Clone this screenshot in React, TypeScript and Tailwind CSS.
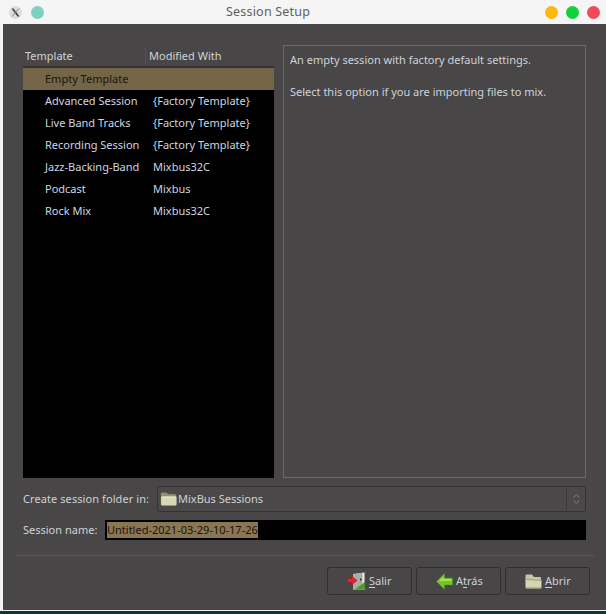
const FONT = "font-['Noto_Sans',sans-serif]";

const rows = [
  ["Advanced Session", "{Factory Template}"],
  ["Live Band Tracks", "{Factory Template}"],
  ["Recording Session", "{Factory Template}"],
  ["Jazz-Backing-Band", "Mixbus32C"],
  ["Podcast", "Mixbus"],
  ["Rock Mix", "Mixbus32C"],
];

function FolderIcon() {
  return (
    <svg width="17" height="15" viewBox="0 0 16 14" className="shrink-0 -translate-y-px">
      <path d="M0.5 2.5 Q0.5 1 2 1 H6 L7.5 2.5 H14 Q15.5 2.5 15.5 4 V12.5 Q15.5 13.5 14.5 13.5 H1.5 Q0.5 13.5 0.5 12.5 Z" fill="#8f8f73" stroke="#4a4a3c" strokeWidth="0.6" />
      <path d="M1.5 5 H15 Q15.6 5 15.6 5.6 V12.5 Q15.6 13.5 14.5 13.5 H2 Q1 13.5 1 12.5 V5.5 Z" fill="#d6d8b4" />
      <path d="M2 5.6 H14.8" stroke="#f1f2d8" strokeWidth="0.8" />
    </svg>
  );
}

function OpenFolderIcon() {
  return (
    <svg width="17" height="15" viewBox="0 0 17 15" className="shrink-0">
      <path d="M0.5 1.5 Q0.5 0.5 1.5 0.5 H7 L9 3 H15 Q16 3 16 4 V6 H0.5 Z" fill="#c5c7a4" />
      <path d="M0.5 5 L16.5 6 V13.5 Q16.5 14.5 15.5 14.5 H1.5 Q0.5 14.5 0.5 13.5 Z" fill="#d4d6b6" />
      <path d="M1 5.5 L16 6.4" stroke="#8c8d70" strokeWidth="0.8" />
      <path d="M1 13.8 H16" stroke="#96977a" strokeWidth="0.8" />
    </svg>
  );
}

function ExitIcon() {
  return (
    <svg width="20" height="18" viewBox="0 0 20 18" className="shrink-0">
      <path d="M6 2 L18.5 0.5 V17.5 H6 Z" fill="#eceee8" />
      <path d="M17.5 0.5 H19 V17.5 H17.5 Z" fill="#4a4a44" />
      <path d="M6 2.5 L15.5 0.5 V13 L6 17.5 Z" fill="#a9aba5" />
      <path d="M7 17.5 L15.5 12 L18 9 V17.5 Z" fill="#4e9a26" />
      <rect x="13" y="6.5" width="1.5" height="2" fill="#2c2c2c" />
      <path d="M0.5 6.5 H4.5 V4 L10 8.5 L4.5 13 V10.5 H0.5 Z" fill="#e3222e" stroke="#9c1118" strokeWidth="0.5" />
    </svg>
  );
}

function BackIcon() {
  return (
    <svg width="17" height="17" viewBox="0 0 17 17" className="shrink-0">
      <path d="M0.5 8.5 L8.5 0.5 V5 H16.5 V12 H8.5 V16.5 Z" fill="#76c32c" stroke="#4a8f1c" strokeWidth="0.6" />
      <path d="M3 8 L7.5 3.5 V6 H15.5 V8 Z" fill="#a5e05a" />
    </svg>
  );
}

function ChooserArrows() {
  return (
    <svg width="7" height="10" viewBox="0 0 7 10" fill="none" stroke="#85857f" strokeWidth="1">
      <path d="M0.7 3.5 L3.5 0.8 L6.3 3.5" />
      <path d="M0.7 6.5 L3.5 9.2 L6.3 6.5" />
    </svg>
  );
}

function XLogo() {
  return (
    <svg width="9" height="9" viewBox="0 0 9 9">
      <path d="M0.5 0.5 H2.5 L8.5 8.5 H6.5 Z" fill="#3a3a3a" />
      <path d="M7.8 0.5 L1 8.5" stroke="#c9713f" strokeWidth="1" />
    </svg>
  );
}

function Dot({ color }: { color: string }) {
  return <span className="block h-[13px] w-[13px] rounded-full" style={{ backgroundColor: color }} />;
}

function ActionButton({ icon, pre, mnemonic, post, gap }: { icon: React.ReactNode; pre?: string; mnemonic: string; post: string; gap: string }) {
  return (
    <button className={`flex h-[28px] w-[85px] items-center rounded-[3px] border border-[#302e2e] bg-[#484646] pl-[19px] text-[#cdd3db] ${gap}`}>
      {icon}
      <span>
        {pre}
        <span className="underline underline-offset-2">{mnemonic}</span>
        {post}
      </span>
    </button>
  );
}

export default function App() {
  return (
    <div className={`flex h-[614px] w-[606px] flex-col overflow-hidden bg-[#f3f3f3] text-[11px] leading-[16px] antialiased ${FONT}`}>
      <header className="relative flex h-[24px] shrink-0 items-center justify-between bg-[#f5f5f5] pl-[9px] pr-[6px]">
        <div className="flex items-center gap-[9px]">
          <span className="flex h-[13px] w-[13px] items-center justify-center rounded-full bg-[#dcdcdc]">
            <XLogo />
          </span>
          <Dot color="#7dd1c3" />
        </div>
        <span className="absolute left-[226px] whitespace-nowrap text-[12.5px] tracking-[0.2px] text-[#5f5f5f]">Session Setup</span>
        <div className="flex items-center gap-[8px]">
          <Dot color="#fdb90b" />
          <Dot color="#14cf3c" />
          <Dot color="#f5495a" />
        </div>
      </header>

      <main className="ml-[3px] flex h-[586px] flex-col bg-[#484646] text-[#cdd3db]">
        <div className="flex h-[454px] shrink-0 gap-[9px] pl-[20px] pr-[20px] pt-[21px]">
          <div className="flex w-[251px] flex-col">
            <div className="flex h-[23px] shrink-0 items-center border-b-2 border-[#353333] text-[#cdd3db]">
              <span className="w-[122px] pl-[2px]">Template</span>
              <span className="border-l border-[#565454] pl-[3px]">Modified With</span>
            </div>
            <div className="flex-1 bg-black">
              <div className="flex h-[22px] items-center bg-[#736545] pl-[22px] text-[#1a1712]">Empty Template</div>
              {rows.map(([name, mod]) => (
                <div key={name} className="flex h-[22px] items-center pl-[22px] text-[#ccd6e2]">
                  <span className="w-[108px] shrink-0 whitespace-nowrap">{name}</span>
                  <span className="whitespace-nowrap">{mod}</span>
                </div>
              ))}
            </div>
          </div>
          <div className="w-[303px] border border-[#6a6868] px-[6px] py-[6px]">
            <p>An empty session with factory default settings.</p>
            <p className="mt-[16px]">Select this option if you are importing files to mix.</p>
          </div>
        </div>

        <div className="mt-[8px] flex h-[26px] shrink-0 items-center pl-[20px] pr-[20px]">
          <span className="w-[134px] shrink-0 whitespace-nowrap tracking-[0.08px]">Create session folder in:</span>
          <div className="flex h-[26px] flex-1 items-center rounded-[3px] border border-[#343232] bg-[#4a4848] pl-[2px]">
            <FolderIcon />
            <span className="ml-px">MixBus Sessions</span>
            <span className="ml-auto flex h-[22px] w-[19px] items-center justify-center border-l border-[#3a3838]">
              <ChooserArrows />
            </span>
          </div>
        </div>

        <div className="mt-[8px] flex h-[20px] shrink-0 items-center pl-[20px] pr-[20px]">
          <span className="w-[82px] shrink-0">Session name:</span>
          <div className="flex h-[20px] flex-1 items-center bg-black pl-[2px]">
            <span className="bg-[#8a7650] text-[#181510]">Untitled-2021-03-29-10-17-26</span>
          </div>
        </div>

        <div className="mx-[12px] mt-[15px] h-px shrink-0 bg-[#5a5858]" />

        <div className="mt-[11px] flex justify-end gap-[4px] pr-[16px]">
          <ActionButton icon={<ExitIcon />} mnemonic="S" post="alir" gap="gap-[2px]" />
          <ActionButton icon={<BackIcon />} pre="A" mnemonic="t" post="rás" gap="gap-[3px]" />
          <ActionButton icon={<OpenFolderIcon />} mnemonic="A" post="brir" gap="gap-[3px]" />
        </div>
      </main>

      <div className="h-[1px] shrink-0 bg-[#e8f2f2]" />
      <div className="flex-1 bg-[#12333a]" />
    </div>
  );
}
